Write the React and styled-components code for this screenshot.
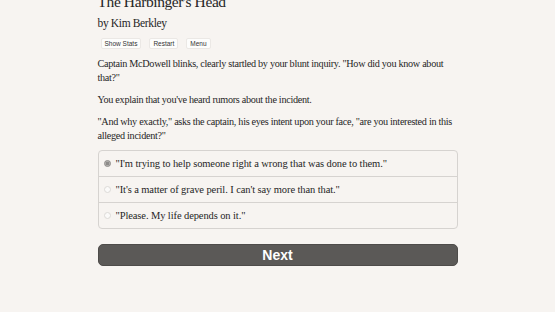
import styled, { createGlobalStyle } from "styled-components";
import { useState } from "react";

const GlobalStyle = createGlobalStyle`
  html, body {
    margin: 0;
    padding: 0;
    background: #f7f4f1;
  }
  body {
    font-family: "Liberation Serif", "Times New Roman", serif;
    color: #262626;
  }
`;

const Page = styled.div`
  width: 360px;
  margin: 0 auto;
`;

const Title = styled.h1`
  font-size: 15.5px;
  letter-spacing: -0.4px;
  font-weight: normal;
  margin: -7px 0 0;
  line-height: 18px;
`;

const Author = styled.h2`
  font-size: 11.5px;
  letter-spacing: -0.35px;
  font-weight: normal;
  margin: 5px 0 0;
  line-height: 14px;
`;

const ButtonRow = styled.div`
  display: flex;
  gap: 8px;
  margin: 8px 0 0 3px;
`;

const SmallButton = styled.button`
  font-family: "Liberation Sans", Arial, sans-serif;
  font-size: 6.5px;
  padding: 1px 3px;
  background: #fdfdfc;
  border: 1px solid #ebe8e5;
  border-radius: 2px;
  color: #333;
  line-height: 7px;
`;

const Para = styled.p`
  font-size: 10.2px;
  letter-spacing: -0.3px;
  line-height: 14px;
  margin: 8px 0 0;
`;

const ChoiceBox = styled.div`
  margin-top: 7px;
  border: 1px solid #d6d3d0;
  border-radius: 4px;
  background: #f7f4f1;
`;

const Choice = styled.label`
  display: flex;
  align-items: center;
  gap: 4px;
  height: 25px;
  padding-left: 5px;
  font-size: 10.5px;
  letter-spacing: -0.1px;
  cursor: pointer;
  border-top: ${(p) => (p.$first ? "none" : "1px solid #d6d3d0")};
`;

const Radio = styled.span`
  width: 7px;
  height: 7px;
  border-radius: 50%;
  margin-right: 1px;
  box-sizing: border-box;
  border: 1px solid ${(p) => (p.$on ? "#8a8886" : "#dcdad7")};
  background: ${(p) => (p.$on ? "radial-gradient(circle, #8d8b89 45%, #b9b7b5 60%)" : "#fbfaf9")};
`;

const NextButton = styled.button`
  display: block;
  width: 100%;
  margin-top: 15px;
  height: 22px;
  background: #5b5957;
  color: #fff;
  border: 1px solid #4e4c4a;
  border-radius: 5px;
  font-family: "Liberation Sans", Arial, sans-serif;
  font-weight: bold;
  font-size: 14px;
  cursor: pointer;
`;

const choices = [
  "\"I'm trying to help someone right a wrong that was done to them.\"",
  "\"It's a matter of grave peril. I can't say more than that.\"",
  "\"Please. My life depends on it.\"",
];

export default function App() {
  const [selected, setSelected] = useState(0);
  return (
    <>
      <GlobalStyle />
      <Page>
        <Title>The Harbinger's Head</Title>
        <Author>by Kim Berkley</Author>
        <ButtonRow>
          <SmallButton>Show Stats</SmallButton>
          <SmallButton>Restart</SmallButton>
          <SmallButton>Menu</SmallButton>
        </ButtonRow>
        <Para>
          Captain McDowell blinks, clearly startled by your blunt inquiry. "How did you know about that?"
        </Para>
        <Para>You explain that you've heard rumors about the incident.</Para>
        <Para>
          "And why exactly," asks the captain, his eyes intent upon your face, "are you interested in this
          alleged incident?"
        </Para>
        <ChoiceBox>
          {choices.map((c, i) => (
            <Choice key={i} $first={i === 0} onClick={() => setSelected(i)}>
              <Radio $on={selected === i} />
              {c}
            </Choice>
          ))}
        </ChoiceBox>
        <NextButton>Next</NextButton>
      </Page>
    </>
  );
}
